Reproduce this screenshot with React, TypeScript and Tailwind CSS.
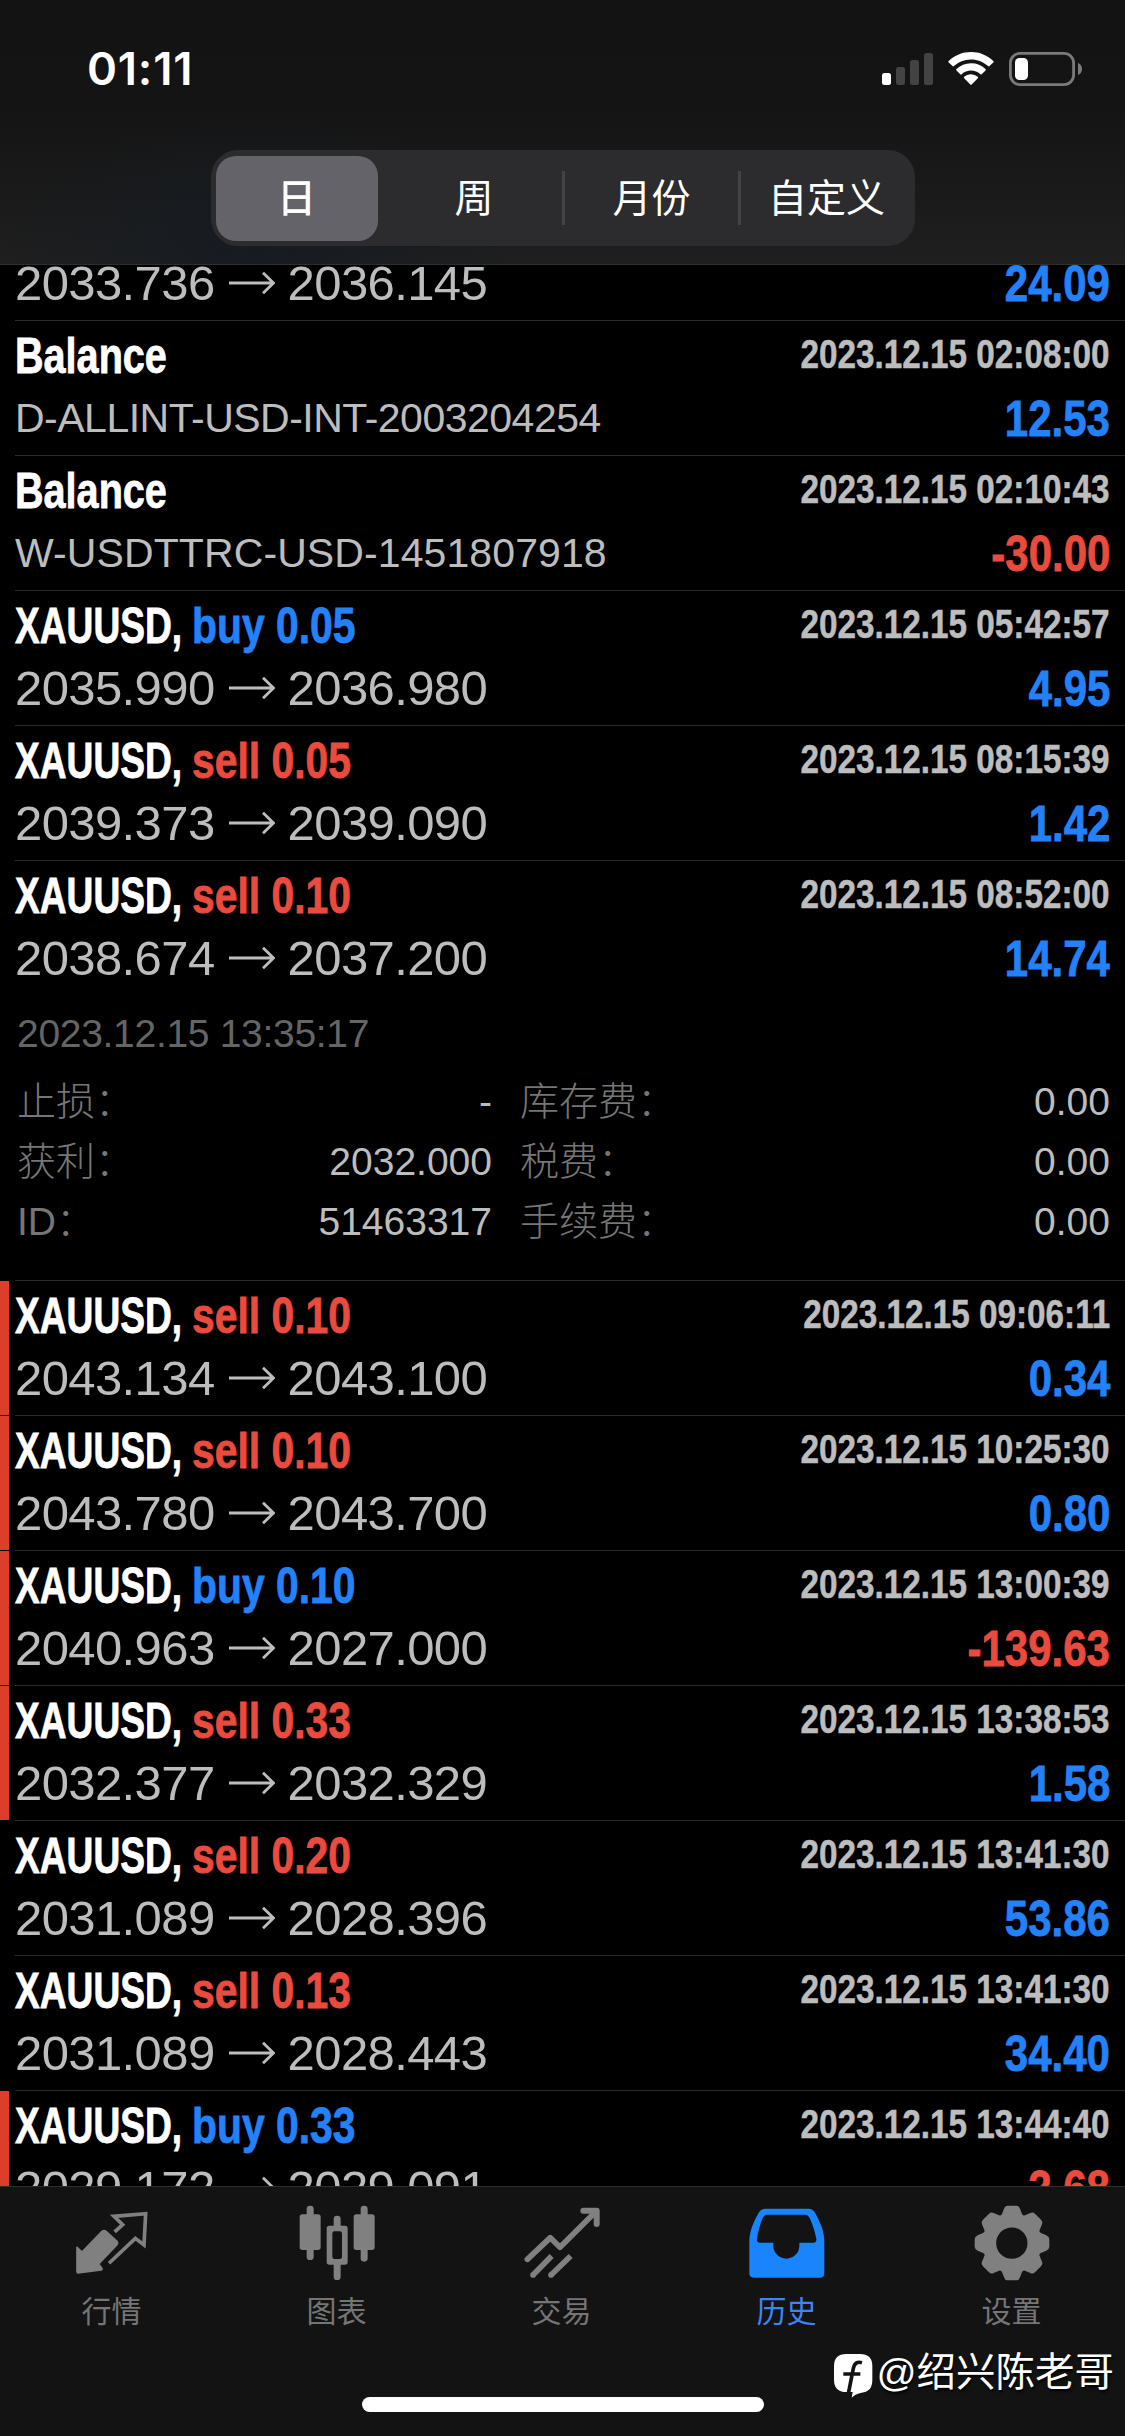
import type { ReactNode } from "react"
import clsx from "clsx"

type Deal = {
  title?: string
  side?: "buy" | "sell"
  volume?: string
  open?: string
  close?: string
  comment?: string
  time?: string
  profit: string
  marked?: boolean
  expanded?: boolean
}

// La primera fila queda a medias bajo la cabecera: solo se ve su segunda línea
const deals: Deal[] = [
  { open: "2033.736", close: "2036.145", profit: "24.09" },
  { title: "Balance", comment: "D-ALLINT-USD-INT-2003204254", time: "2023.12.15 02:08:00", profit: "12.53" },
  { title: "Balance", comment: "W-USDTTRC-USD-1451807918", time: "2023.12.15 02:10:43", profit: "-30.00" },
  { title: "XAUUSD,", side: "buy", volume: "0.05", open: "2035.990", close: "2036.980", time: "2023.12.15 05:42:57", profit: "4.95" },
  { title: "XAUUSD,", side: "sell", volume: "0.05", open: "2039.373", close: "2039.090", time: "2023.12.15 08:15:39", profit: "1.42" },
  { title: "XAUUSD,", side: "sell", volume: "0.10", open: "2038.674", close: "2037.200", time: "2023.12.15 08:52:00", profit: "14.74", expanded: true },
  { title: "XAUUSD,", side: "sell", volume: "0.10", open: "2043.134", close: "2043.100", time: "2023.12.15 09:06:11", profit: "0.34", marked: true },
  { title: "XAUUSD,", side: "sell", volume: "0.10", open: "2043.780", close: "2043.700", time: "2023.12.15 10:25:30", profit: "0.80", marked: true },
  { title: "XAUUSD,", side: "buy", volume: "0.10", open: "2040.963", close: "2027.000", time: "2023.12.15 13:00:39", profit: "-139.63", marked: true },
  { title: "XAUUSD,", side: "sell", volume: "0.33", open: "2032.377", close: "2032.329", time: "2023.12.15 13:38:53", profit: "1.58", marked: true },
  { title: "XAUUSD,", side: "sell", volume: "0.20", open: "2031.089", close: "2028.396", time: "2023.12.15 13:41:30", profit: "53.86" },
  { title: "XAUUSD,", side: "sell", volume: "0.13", open: "2031.089", close: "2028.443", time: "2023.12.15 13:41:30", profit: "34.40" },
  { title: "XAUUSD,", side: "buy", volume: "0.33", open: "2029.172", close: "2029.091", time: "2023.12.15 13:44:40", profit: "-2.68", marked: true },
]

const details = [
  ["止损：", "-", "库存费：", "0.00"],
  ["获利：", "2032.000", "税费：", "0.00"],
  ["ID：", "51463317", "手续费：", "0.00"],
]

const segments = ["日", "周", "月份", "自定义"]

function StatusIcons() {
  return (
    <svg viewBox="0 0 204 40" className="w-[204px] h-[40px]">
      <g transform="translate(-880 -49)">
        {/* Señal */}
        <rect x="882" y="73" width="9" height="12" rx="2.5" fill="#fff" />
        <rect x="896" y="67" width="9" height="18" rx="2.5" fill="#434343" />
        <rect x="910" y="60" width="9" height="25" rx="2.5" fill="#434343" />
        <rect x="924" y="53" width="9" height="32" rx="2.5" fill="#434343" />
        {/* Wifi */}
        <g fill="#fff">
          <path d="M971 52c-8.700 0-16.600 3.400-22.300 8.900a1 1 0 0 0 0 1.500l3.800 3.700a1 1 0 0 0 1.400 0A24.600 24.600 0 0 1 971 59.500c6.600 0 12.600 2.600 17.100 6.600a1 1 0 0 0 1.400 0l3.800-3.700a1 1 0 0 0 0-1.500C987.600 55.400 979.700 52 971 52z" />
          <path d="M971 63.200c-5.700 0-10.800 2.200-14.500 5.900a1 1 0 0 0 0 1.500l3.800 3.700a1 1 0 0 0 1.400 0 13.600 13.600 0 0 1 18.600 0 1 1 0 0 0 1.400 0l3.800-3.700a1 1 0 0 0 0-1.500A20.400 20.400 0 0 0 971 63.200z" />
          <path d="M971 74.200c-2.600 0-5 .900-6.800 2.500a1 1 0 0 0 0 1.500l6.100 6.200a1 1 0 0 0 1.400 0l6.100-6.200a1 1 0 0 0 0-1.500 10.300 10.300 0 0 0-6.800-2.500z" />
        </g>
        {/* Batería */}
        <rect x="1010.400" y="53.400" width="63.200" height="31.200" rx="9.500" fill="none" stroke="#7a7a7a" strokeWidth="2.800" />
        <rect x="1015" y="58" width="13" height="22" rx="4.500" fill="#fff" />
        <path d="M1078 63c2.600.900 4 3.200 4 6s-1.400 5.100-4 6z" fill="#7a7a7a" />
      </g>
    </svg>
  )
}

function Header() {
  return (
    <header className="h-[265px] shrink-0 border-b border-[#2e2e2e] bg-[radial-gradient(ellipse_260px_130px_at_260px_245px,#161b22_0%,transparent_100%),linear-gradient(to_bottom,#131313_0%,#141414_40%,#1f1f1f_100%)]">
      <div className="flex h-[150px] items-start justify-between pt-[49px] pl-[87px] pr-[41px]">
        <span className="mt-[-3px] font-['Inter'] text-[45.500px] leading-[46px] font-semibold tracking-[0.8px] text-white">01:11</span>
        <StatusIcons />
      </div>
      <div className="mx-auto flex h-[96px] w-[704px] items-center rounded-[27px] bg-[#2c2c2f]">
        {segments.map((label, i) => (
          <div key={label} className="flex h-full flex-1 items-center">
            <div
              className={clsx(
                "flex h-[85px] flex-1 items-center justify-center pt-px text-[39px] leading-none text-white",
                i === 0 && "ml-[5px] mr-[9px] rounded-[20px] bg-[#636369] font-medium",
                i === 2 && "pl-[3px]"
              )}
            >
              {label}
            </div>
            {(i === 1 || i === 2) && <div className="-mr-[2px] h-[54px] w-[3px] bg-[#434347]" />}
          </div>
        ))}
      </div>
    </header>
  )
}

function Arrow() {
  return (
    <svg viewBox="0 0 46 24" className="mt-[12px] ml-[14px] mr-[13px] h-[24px] w-[46px]" fill="none" stroke="#bdbdbd" strokeWidth="2.800">
      <path d="M0 12h44M34 1.800 44.500 12 34 22.200" />
    </svg>
  )
}

function Details() {
  return (
    <div className="h-[285px] pt-[19px] pl-[2px] text-[39px] leading-none">
      <p className="tracking-[-0.3px] text-[#656565]">2023.12.15 13:35:17</p>
      <div className="mt-[18px]">
        {details.map(([label, value, label2, value2]) => (
          <div key={label} className="flex h-[60px] items-center font-light">
            <span className="text-[#767676]">{label}</span>
            <span className="ml-auto text-[#bdbdbd]">{value}</span>
            <div className="ml-[28px] flex w-[590px] justify-between">
              <span className="text-[#767676]">{label2}</span>
              <span className="text-[#bdbdbd]">{value2}</span>
            </div>
          </div>
        ))}
      </div>
    </div>
  )
}

function DealRow({ deal }: { deal: Deal }) {
  return (
    <div className="flex shrink-0">
      <div className={clsx("mb-px w-[9px] shrink-0", deal.marked && "bg-[#dd3e2b]")} />
      <div className="ml-[6px] flex-1 border-b border-[#2b2b2b] pr-[15px]">
        {deal.title && (
          <div className="flex h-[73px] items-start justify-between pt-[10px] text-[49.500px] leading-none font-bold">
            <div className="flex [-webkit-text-stroke:0.8px_currentColor]">
              <span className={clsx("origin-left text-white", deal.side ? "w-[228px] -mr-[51px] scale-x-[0.75]" : "scale-x-[0.8]")}>
                {deal.title}
              </span>
              {deal.side && (
                <span
                  className={clsx(
                    "origin-left scale-x-[0.825] whitespace-nowrap",
                    deal.side === "buy" ? "text-[#2382fa]" : "text-[#ea4b3d]"
                  )}
                >
                  {deal.side} {deal.volume}
                </span>
              )}
            </div>
            <span className="mt-[4px] origin-right scale-x-[0.836] text-[39.800px] whitespace-nowrap text-[#bdbdbd] [-webkit-text-stroke:0.5px_currentColor]">
              {deal.time}
            </span>
          </div>
        )}
        <div className="flex h-[61px] items-start justify-between text-[49px] leading-none text-[#bdbdbd]">
          {deal.comment ? (
            <span className={clsx("mt-[4px] text-[41px]", deal.comment.startsWith("D") ? "tracking-[-0.5px]" : "tracking-[0.1px]")}>
              {deal.comment}
            </span>
          ) : (
            <div className="flex tracking-[-0.6px]">
              <span>{deal.open}</span>
              <Arrow />
              <span>{deal.close}</span>
            </div>
          )}
          <span
            className={clsx(
              "origin-right scale-x-[0.848] text-[49.500px] font-bold [-webkit-text-stroke:0.8px_currentColor]",
              deal.profit.startsWith("-") ? "text-[#ea4b3d]" : "text-[#2382fa]"
            )}
          >
            {deal.profit}
          </span>
        </div>
        {deal.expanded && <Details />}
      </div>
    </div>
  )
}

const tabs: { label: string; viewBox: string; icon: ReactNode; active?: boolean }[] = [
  {
    label: "行情",
    viewBox: "217 430 234 234",
    icon: (
      <>
        <path
          d="M229 563l15 14 60-62q6-5 12 0l33 30q4 5 0 10l-55 58 9 12q3 4-2 6l-69 9q-3 0-3-5z"
          fill="currentColor"
          stroke="currentColor"
          strokeWidth="5"
          strokeLinejoin="round"
        />
        <path d="M346 513l20-18-26-25 95-8-5 94-26-20-75 71" fill="none" stroke="currentColor" strokeWidth="11" strokeLinecap="square" />
      </>
    ),
  },
  {
    label: "图表",
    viewBox: "892 430 234 234",
    icon: (
      <g fill="currentColor">
        <rect x="918" y="438" width="21" height="163" rx="10" />
        <rect x="897" y="464" width="63" height="107" rx="8" />
        <rect x="1080" y="438" width="21" height="168" rx="10" />
        <rect x="1059" y="464" width="63" height="107" rx="8" />
        <rect x="999" y="468" width="21" height="40" rx="10" />
        <rect x="999" y="605" width="21" height="56" rx="10" />
        <path fillRule="evenodd" d="M986 498h47q8 0 8 8v101q0 8-8 8h-47q-8 0-8-8V506q0-8 8-8zm15 17q-6 0-6 7v69q0 7 6 7h17q6 0 6-7v-69q0-7-6-7z" />
      </g>
    ),
  },
  {
    label: "交易",
    viewBox: "367 430 234 234",
    icon: (
      <g fill="none" stroke="currentColor" strokeWidth="17" strokeLinejoin="round">
        <path d="M380 599l69-65 29 29 109-109" strokeLinecap="round" />
        <path d="M548 453h40v40" strokeLinecap="round" strokeWidth="18" />
        <path d="M397 646l56-57M451 646l59-57" />
        <path d="M397 646h.1M451 646h.1" strokeLinecap="round" />
      </g>
    ),
  },
  {
    label: "历史",
    viewBox: "68 430 234 234",
    active: true,
    icon: (
      <path
        fill="currentColor"
        fillRule="evenodd"
        d="M120 447h130q12 0 18 11c16 28 29 57 29 88v95q0 13-13 13H85q-13 0-13-13v-95c0-31 13-60 29-88q6-11 19-11zm6 18q-9 0-14 10c-8 20-14 41-17 63q-1 11 9 11h40v9a39 39 0 0 0 78 0v-9h42q10 0 9-11c-4-22-11-43-20-63q-5-10-14-10z"
      />
    ),
  },
  {
    label: "设置",
    viewBox: "743 430 234 234",
    icon: (
      <path
        fill="currentColor"
        fillRule="evenodd"
        d="M846 438h28q7 0 10 9l6 16q3 6 9 4l16-7q8-4 14 2l18 18q6 6 3 14l-7 17q-3 6 4 9l16 7q9 4 9 12v22q0 8-9 12l-16 7q-7 3-4 9l7 17q3 8-3 14l-18 18q-6 6-14 2l-16-7q-6-2-9 4l-6 16q-3 9-10 9h-28q-7 0-10-9l-6-16q-3-6-9-4l-16 7q-8 4-14-2l-18-18q-6-6-3-14l7-17q3-6-4-9l-16-7q-9-4-9-12v-22q0-8 9-12l16-7q7-3 4-9l-7-17q-3-8 3-14l18-18q6-6 14-2l16 7q6 2 9-4l6-16q3-9 10-9zM859.500 503.500a47 47 0 1 0 0 94 47 47 0 0 0 0-94z"
      />
    ),
  },
]

function TabBar() {
  return (
    <nav className="relative h-[250px] shrink-0 border-t border-[#2e2e2e] bg-[#131313]">
      <div className="-ml-px grid w-[1125px] grid-cols-5">
        {tabs.map((tab) => (
          <div key={tab.label} className={clsx("flex flex-col items-center pt-[16px]", tab.active ? "text-[#1a84fc]" : "text-[#808080]")}>
            <svg viewBox={tab.viewBox} className="h-[78px] w-[78px]">
              {tab.icon}
            </svg>
            <span className={clsx("mt-[16px] text-[30px] leading-none", tab.active ? "text-[#3f84f5]" : "text-[#757575]")}>{tab.label}</span>
          </div>
        ))}
      </div>

      {/* Marca de agua */}
      <div className="absolute top-[161px] right-[11px] flex items-start text-white">
        <svg viewBox="26 39 126 138" className="mt-[5px] mr-[1px] h-[46px] w-[42px]">
          <path d="M66 42h41q37 0 37 36v42c0 22-9 33-25 37q-22 3-37 16l3-17H66q-37 0-37-37V78q0-36 37-36z" fill="#fff" />
          <path d="M113 68c-15-4-23 2-26 17l-9 46-6 30M57 102h51" fill="none" stroke="#131313" strokeWidth="11" />
        </svg>
        <span className="text-[39.500px] leading-[48px] [text-shadow:1px_2px_3px_#000]">@绍兴陈老哥</span>
      </div>

      {/* Indicador de inicio */}
      <div className="absolute bottom-[24px] left-[362px] h-[15px] w-[402px] rounded-full bg-white" />
    </nav>
  )
}

export default function App() {
  return (
    <div className="flex h-[2436px] w-[1125px] flex-col overflow-hidden bg-black font-['Liberation_Sans','Noto_Sans_CJK_SC',sans-serif]">
      <Header />
      <main className="min-h-0 flex-1 overflow-hidden">
        <div className="-mt-[6px] flex flex-col">
          {deals.map((deal, i) => (
            <DealRow key={i} deal={deal} />
          ))}
        </div>
      </main>
      <TabBar />
    </div>
  )
}
